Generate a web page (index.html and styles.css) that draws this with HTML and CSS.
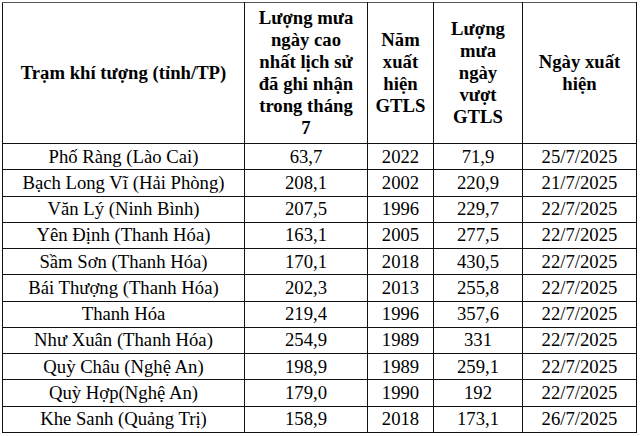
FILE: index.html
```html
<!DOCTYPE html>
<html lang="vi">
<head>
<meta charset="utf-8">
<title>Lượng mưa tháng 7</title>
<link rel="stylesheet" href="styles.css">
</head>
<body>
<table class="rain">
<colgroup>
<col class="c1"><col class="c2"><col class="c3"><col class="c4"><col class="c5">
</colgroup>
<thead>
<tr class="head">
<th>Trạm khí tượng (tỉnh/TP)</th>
<th>Lượng mưa<br>ngày cao<br>nhất lịch sử<br>đã ghi nhận<br>trong tháng<br>7</th>
<th>Năm<br>xuất<br>hiện<br>GTLS</th>
<th>Lượng<br>mưa<br>ngày<br>vượt<br>GTLS</th>
<th>Ngày xuất<br>hiện</th>
</tr>
</thead>
<tbody>
<tr><td>Phố Ràng (Lào Cai)</td><td>63,7</td><td>2022</td><td>71,9</td><td>25/7/2025</td></tr>
<tr><td>Bạch Long Vĩ (Hải Phòng)</td><td>208,1</td><td>2002</td><td>220,9</td><td>21/7/2025</td></tr>
<tr><td>Văn Lý (Ninh Bình)</td><td>207,5</td><td>1996</td><td>229,7</td><td>22/7/2025</td></tr>
<tr><td>Yên Định (Thanh Hóa)</td><td>163,1</td><td>2005</td><td>277,5</td><td>22/7/2025</td></tr>
<tr><td>Sầm Sơn (Thanh Hóa)</td><td>170,1</td><td>2018</td><td>430,5</td><td>22/7/2025</td></tr>
<tr><td>Bái Thượng (Thanh Hóa)</td><td>202,3</td><td>2013</td><td>255,8</td><td>22/7/2025</td></tr>
<tr><td>Thanh Hóa</td><td>219,4</td><td>1996</td><td>357,6</td><td>22/7/2025</td></tr>
<tr><td>Như Xuân (Thanh Hóa)</td><td>254,9</td><td>1989</td><td>331</td><td>22/7/2025</td></tr>
<tr><td>Quỳ Châu (Nghệ An)</td><td>198,9</td><td>1989</td><td>259,1</td><td>22/7/2025</td></tr>
<tr><td>Quỳ Hợp(Nghệ An)</td><td>179,0</td><td>1990</td><td>192</td><td>22/7/2025</td></tr>
<tr><td>Khe Sanh (Quảng Trị)</td><td>158,9</td><td>2018</td><td>173,1</td><td>26/7/2025</td></tr>
</tbody>
</table>
</body>
</html>
```
FILE: styles.css
```css
html, body {
  margin: 0;
  padding: 0;
  background: #ffffff;
}
body {
  padding: 2px 0 0 2px;
  color: #000;
}
.rain {
  border-collapse: collapse;
  table-layout: fixed;
  width: 634px;
  font-family: "Liberation Serif", "Times New Roman", serif;
  font-size: 18.7px;
  color: #000;
}
.c1 { width: 242px; }
.c2 { width: 123px; }
.c3 { width: 66px; }
.c4 { width: 89px; }
.c5 { width: 114px; }
.rain th,
.rain td {
  border: 1.5px solid #111;
  text-align: center;
  vertical-align: middle;
  padding: 0;
}
.rain th {
  font-weight: bold;
  line-height: 22px;
  border-top-color: #555;
}
.head {
  height: 141px;
}
.rain tbody tr {
  height: 26.27px;
}
.rain td {
  line-height: 20px;
}
```
